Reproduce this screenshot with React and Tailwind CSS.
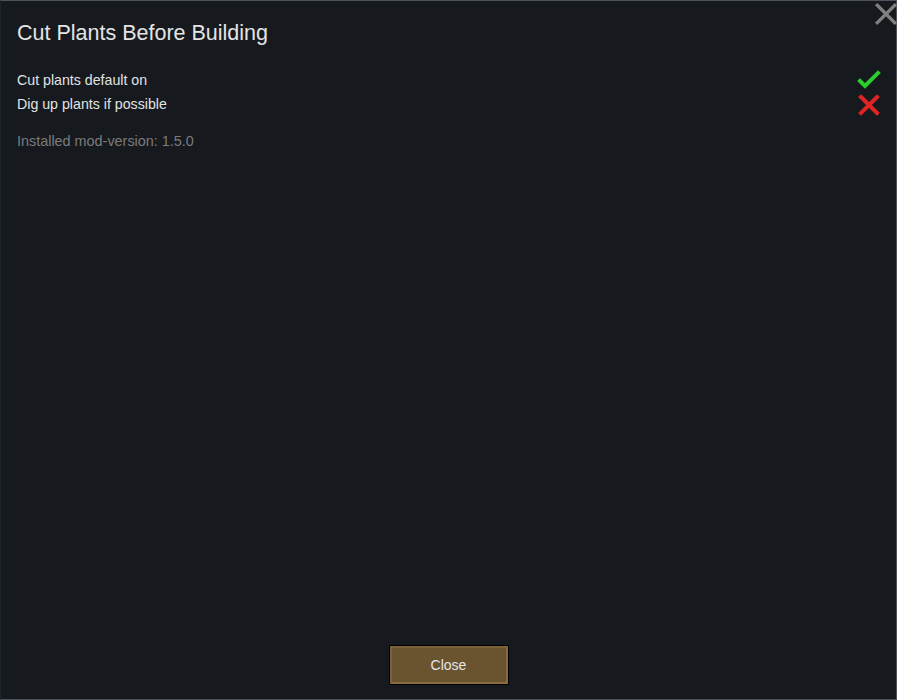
import React from 'react'

function CheckMark() {
  return (
    <svg width="24" height="20" viewBox="0 0 24 20">
      <path d="M3 11 L8 16 L21 3" fill="none" stroke="#2ccd2c" strokeWidth="4" strokeLinecap="square" />
    </svg>
  )
}

function CrossMark({ color, size = 22, stroke = 4 }) {
  return (
    <svg width={size} height={size} viewBox="0 0 22 22">
      <path d="M3 3 L19 19 M19 3 L3 19" fill="none" stroke={color} strokeWidth={stroke} strokeLinecap="square" />
    </svg>
  )
}

export default function App() {
  return (
    <div
      className="w-[897px] h-[700px] bg-[#161a1f] border border-[#4d535b] border-l-[#20252b] flex flex-col relative text-[#e2e2e2]"
      style={{ fontFamily: '"Liberation Sans", Arial, sans-serif' }}
    >
      {/* Close icon */}
      <button className="absolute top-[1px] right-[-2px] w-[24px] h-[24px] flex items-center justify-center">
        <CrossMark color="#808080" size={24} stroke={3} />
      </button>

      <div className="flex-1 flex flex-col px-4 pt-[20px]">
        <h1 className="text-[21.5px] leading-[24px] text-[#e4e4e4]">Cut Plants Before Building</h1>

        <div className="mt-[24px] flex flex-col">
          <div className="flex items-center justify-between h-[24px]">
            <span className="text-[14.2px]">Cut plants default on</span>
            <span className="mr-[-1px] mt-[-2px]"><CheckMark /></span>
          </div>
          <div className="flex items-center justify-between h-[24px]">
            <span className="text-[14.2px]">Dig up plants if possible</span>
            <span className="mr-[0px] mt-[-1px]"><CrossMark color="#e02323" /></span>
          </div>
        </div>

        <p className="mt-[12px] text-[14.4px] leading-[24px] text-[#7b7b7b]">Installed mod-version: 1.5.0</p>
      </div>

      <div className="flex justify-center pb-[14px]">
        <button className="w-[120px] h-[40px] border border-black bg-[#6a532f] shadow-[inset_2px_2px_0_#7c6238,inset_-2px_-2px_0_#8a6c3c] text-[14px] text-[#e6e6e6]">
          Close
        </button>
      </div>
    </div>
  )
}
